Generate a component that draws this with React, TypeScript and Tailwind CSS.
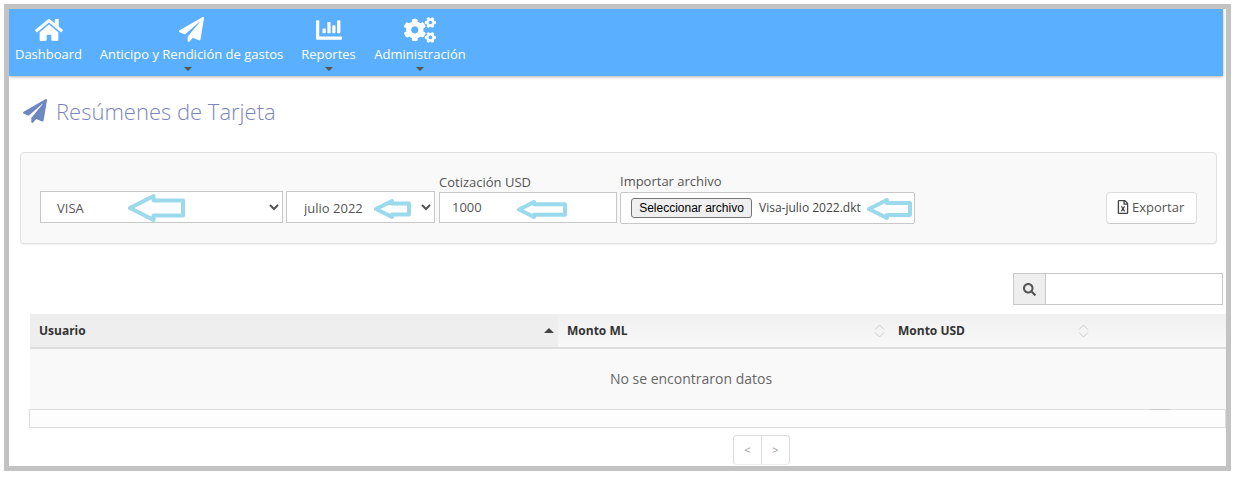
import React from "react";
import { FaHome, FaPaperPlane, FaCogs, FaChartBar, FaSearch, FaRegFileExcel } from "react-icons/fa";

const font = { fontFamily: '"Open Sans", sans-serif' };

function Arrow({ w, h }: { w: number; h: number }) {
  const m = h / 2;
  const head = h * 0.95;
  const t = h * 0.27;
  return (
    <svg width={w} height={h} viewBox={`0 0 ${w} ${h}`} className="block">
      <path
        d={`M3 ${m} L${head} 2 L${head} ${m - t} L${w - 2} ${m - t} L${w - 2} ${m + t} L${head} ${m + t} L${head} ${h - 2} Z`}
        fill="#fbfdfe"
        stroke="#9bd9ec"
        strokeWidth="4"
        strokeLinejoin="round"
      />
    </svg>
  );
}

function NavItem({ icon, label, caret, w }: { icon: React.ReactNode; label: string; caret?: string; w: string }) {
  return (
    <div className={`relative flex flex-col items-center pt-[7px] text-[13px] leading-[18px] text-white ${w}`}>
      <div className="flex h-[27px] items-center justify-center">{icon}</div>
      <div className="mt-[2px] whitespace-nowrap">{label}</div>
      {caret && <div className={`absolute bottom-[5px] h-0 w-0 border-x-[4px] border-t-[4px] border-x-transparent border-t-[#555] ${caret}`} />}
    </div>
  );
}

function Sort() {
  return (
    <svg width="11" height="14" viewBox="0 0 11 14" fill="none" stroke="#cccccc" strokeWidth="1">
      <path d="M1 5.5 L5.5 1 L10 5.5" />
      <path d="M1 8.5 L5.5 13 L10 8.5" />
    </svg>
  );
}

export default function App() {
  return (
    <div style={font} className="h-[481px] w-[1236px] overflow-hidden bg-white pl-1 pt-1 text-[#555]">
      <div className="h-[467px] w-[1227px] overflow-hidden border-[5px] border-[#c3c3c3] bg-white">
        <nav className="flex h-[67px] w-[1214px] bg-[#5aafff] pl-[6px] shadow-[0_1px_3px_rgba(0,0,0,0.3)]">
          <NavItem w="w-[67px]" label="Dashboard" icon={<FaHome size={28} />} />
          <NavItem w="ml-[17px] w-[185px]" label="Anticipo y Rendición de gastos" caret="-ml-[8px]" icon={<FaPaperPlane size={25} />} />
          <NavItem w="ml-[17px] w-[55px]" label="Reportes" caret="ml-[1px]" icon={<FaChartBar size={26} />} />
          <NavItem w="ml-[18px] w-[92px]" label="Administración" caret="-ml-px" icon={<FaCogs size={32} />} />
        </nav>

        <h1 className="mt-[17px] flex h-[36px] items-center gap-[9px] pl-[14px] text-[22px] font-light leading-[36px] text-[#7b86bb]">
          <FaPaperPlane size={24} className="text-[#6f87c0]" />
          Resúmenes de Tarjeta
        </h1>

        <section className="ml-[11px] mt-[23px] flex h-[92px] w-[1197px] items-end rounded-sm border border-[#e0e0e0] bg-[#f9f9f9] pb-[19px] pl-[19px] pr-[19px] shadow-[0_1px_1px_rgba(0,0,0,0.05)]">
          <div className="relative mb-px">
            <select className="block h-[32px] w-[243px] border border-[#c8c8c8] bg-white pl-[12px] pt-[2px] text-[13px] text-[#555] outline-none">
              <option>VISA</option>
            </select>
            <div className="absolute left-[87px] top-[3px]"><Arrow w={58} h={28} /></div>
          </div>
          <div className="relative mb-px ml-[3px]">
            <select className="block h-[32px] w-[149px] border border-[#c8c8c8] bg-white pl-[13px] pt-[2px] text-[13px] text-[#555] outline-none">
              <option>julio 2022</option>
            </select>
            <div className="absolute left-[87px] top-[8px]"><Arrow w={38} h={20} /></div>
          </div>
          <div className="relative mb-px ml-[4px]">
            <div className="mb-px text-[13px] leading-[17px] text-[#555]">Cotización USD</div>
            <div className="flex h-[31px] w-[178px] items-center border border-[#c8c8c8] bg-white pl-[12px] text-[13px]">1000</div>
            <div className="absolute bottom-[4px] left-[77px]"><Arrow w={51} h={19} /></div>
          </div>
          <div className="relative ml-[3px]">
            <div className="mb-[2px] text-[13px] leading-[17px] text-[#555]">Importar archivo</div>
            <div className="flex h-[32px] w-[295px] items-center rounded-[2px] border border-[#c8c8c8] bg-white pl-[10px] text-[12px]">
              <button style={{ fontFamily: '"Liberation Sans", sans-serif' }} className="h-[20px] w-[121px] rounded-[3px] border border-[#767676] bg-[#efefef] text-[12px] leading-[18px] text-black">
                Seleccionar archivo
              </button>
              <span className="ml-[7px] text-[#444]">Visa-julio 2022.dkt</span>
            </div>
            <div className="absolute bottom-[4px] left-[246px]"><Arrow w={46} h={22} /></div>
          </div>
          <button className="ml-auto flex h-[32px] w-[91px] items-center gap-[2px] rounded-sm border border-[#ddd] border-b-[#ccc] bg-white pb-[2px] pl-[9px] text-[13px] leading-none text-[#555]">
            <FaRegFileExcel size={14} className="text-[#444]" />
            Exportar
          </button>
        </section>

        <div className="ml-[1004px] mt-[29px] flex h-[32px] w-[210px] border border-[#c8c8c8]">
          <div className="flex w-[32px] items-center justify-center border-r border-[#c8c8c8] bg-[#eee]">
            <FaSearch size={13} className="text-[#555]" />
          </div>
          <div className="flex-1 bg-white" />
        </div>

        <div className="ml-[21px] mt-[9px] flex h-[35px] w-[1196px] border-b-2 border-[#ddd] bg-gradient-to-b from-[#f0f0f0] to-[#f8f8f8] text-[12px] font-bold text-[#333]">
          <div className="flex w-[528px] items-center justify-between bg-[#eee] pl-[9px] pr-[4px]">
            Usuario
            <span className="h-0 w-0 border-x-[5px] border-b-[5px] border-x-transparent border-b-[#444]" />
          </div>
          <div className="flex w-[331px] items-center justify-between pl-[9px] pr-[4px]">
            Monto ML
            <Sort />
          </div>
          <div className="flex w-[208px] items-center justify-between pl-[9px] pr-[8px]">
            Monto USD
            <Sort />
          </div>
        </div>
        <div className="ml-[21px] flex h-[60px] w-[1196px] items-center justify-center bg-[#f9f9f9] pb-[2px] pl-[126px] text-[14px] text-[#666]">
          No se encontraron datos
        </div>
        <div className="relative ml-[20px] h-[19px] w-[1197px] border border-[#ddd] bg-[#fdfdfd]">
          <div className="absolute -top-px left-[1120px] h-px w-[20px] bg-[#ccc]" />
        </div>
        <div className="ml-[724px] mt-[7px] flex h-[30px] w-[57px] rounded-sm border border-[#ddd] border-b-[#eee] bg-white text-[11px] text-[#999]">
          <div className="flex flex-1 items-center justify-center border-r border-[#ddd]">&lt;</div>
          <div className="flex flex-1 items-center justify-center">&gt;</div>
        </div>
      </div>
    </div>
  );
}
